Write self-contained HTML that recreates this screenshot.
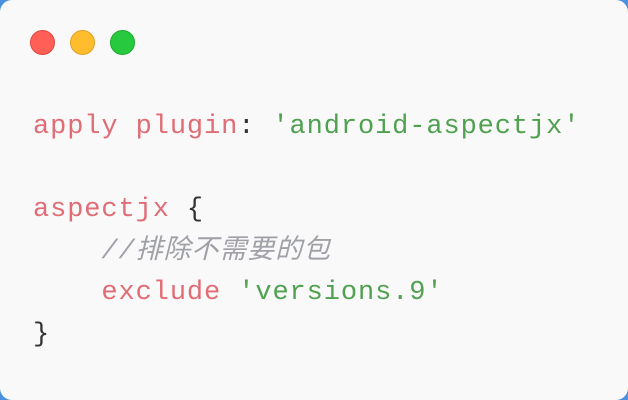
<!DOCTYPE html>
<html><head><meta charset="utf-8"><style>
html,body{margin:0;padding:0;width:628px;height:400px;background:#4a8fe0;overflow:hidden}
.card{position:absolute;left:0;top:0;width:628px;height:400px;background:#f9f9fa;border-radius:12px}
.dot{position:absolute;top:30px;width:23px;height:23px;border-radius:50%}
pre{position:absolute;left:33px;top:107px;margin:0;font-family:"Liberation Mono","Noto Sans CJK SC",monospace;font-size:27px;letter-spacing:0.9px;line-height:41.5px;color:#333}
.k{color:#e06c75}.s{color:#50a14f}.c{color:#a0a1a7;font-style:italic}
</style></head><body>
<div class="card">
<div class="dot" style="left:30px;background:#ff5f56;border:1px solid #e0443e"></div>
<div class="dot" style="left:70px;background:#ffbd2e;border:1px solid #dea123"></div>
<div class="dot" style="left:110px;background:#27c93f;border:1px solid #1aab29"></div>
<pre><span class="k">apply plugin</span>: <span class="s">'android-aspectjx'</span>

<span class="k">aspectjx</span> {
    <span class="c">//排除不需要的包</span>
    <span class="k">exclude</span> <span class="s">'versions.9'</span>
}</pre>
</div>
</body></html>
